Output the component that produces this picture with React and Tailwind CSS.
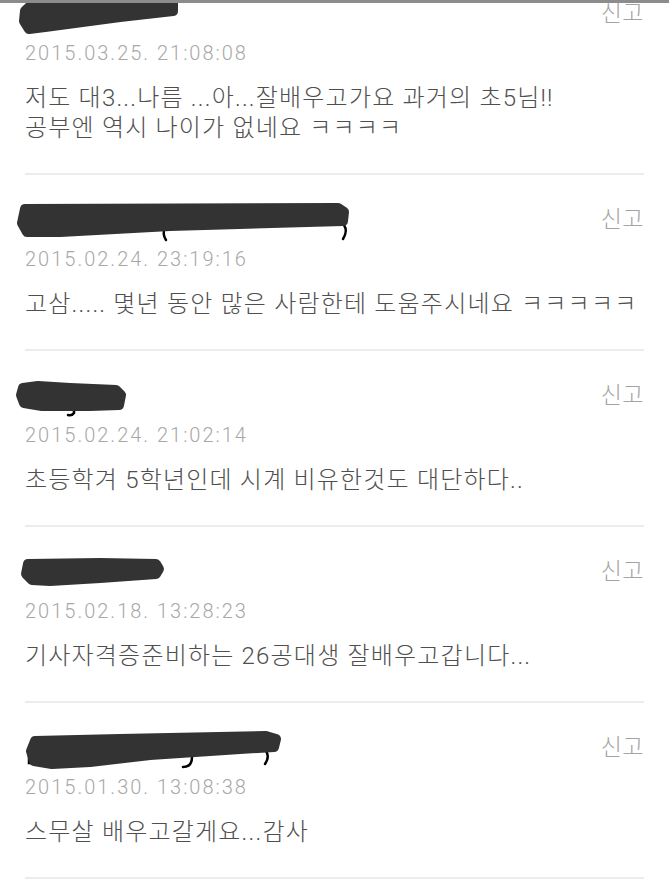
import React from "react";

// redacted nicknames -> dark marker blobs (screen x, row y)
const comments = [
  {
    date: "2015.03.25. 21:08:08",
    lines: ["저도 대3...나름 ...아...잘배우고가요 과거의 초5님!!", "공부엔 역시 나이가 없네요 ㅋㅋㅋㅋ"],
    blob: { w: 156, d: "M25 22 L42 6 L173 6 L173 22 L120 28 L45 38 L29 40 L24 32 Z", bits: [] },
  },
  {
    date: "2015.02.24. 23:19:16",
    lines: ["고삼..... 몇년 동안 많은 사람한테 도움주시네요 ㅋㅋㅋㅋㅋ"],
    blob: {
      w: 328,
      d: "M25 14 L338 13 L344 17 L343 26 L170 31 L60 37 L27 37 L22 28 Z",
      bits: ["M165 32 Q162 39 166 45", "M344 30 Q348 36 343 44"],
    },
  },
  {
    date: "2015.02.24. 21:02:14",
    lines: ["초등학겨 5학년인데 시계 비유한것도 대단하다.."],
    blob: {
      w: 104,
      d: "M23 17 L38 15 L70 17 L116 19 L121 24 L119 34 L90 35 L42 35 L24 32 L21 24 Z",
      bits: ["M74 34 L74 42 Q72 45 68 44"],
    },
  },
  {
    date: "2015.02.18. 13:28:23",
    lines: ["기사자격증준비하는 26공대생 잘배우고갑니다..."],
    blob: { w: 142, d: "M28 17 L100 16 L156 17 L159 22 L156 27 L100 31 L50 34 L32 33 L26 27 Z", bits: [] },
  },
  {
    date: "2015.01.30. 13:08:38",
    lines: ["스무살 배우고갈게요...감사"],
    blob: {
      w: 260,
      d: "M35 18 L120 16 L266 13 L276 16 L274 24 L240 26 L150 32 L90 39 L52 41 L34 38 L31 28 Z",
      bits: ["M29 26 L29 40 L38 40", "M192 34 Q192 44 183 44", "M266 28 Q270 34 265 41"],
    },
  },
];

const kr = "font-['Roboto','Noto_Sans_CJK_KR',sans-serif]";

function Blob({ w, d, bits }) {
  return (
    <svg width={w} height="44" viewBox={`25 0 ${w} 44`} className="block shrink-0 overflow-visible">
      {bits.map((b, i) => (
        <path key={i} d={b} fill="none" stroke="#000" strokeWidth="2.5" strokeLinecap="round" />
      ))}
      <path d={d} fill="#333" stroke="#333" strokeWidth="10" strokeLinejoin="round" />
    </svg>
  );
}

function Comment({ c }) {
  return (
    <div className="mx-[25px] pt-[20px] pb-[30px] border-b-2 border-[#ececec]">
      <div className="h-[44px] flex items-center justify-between">
        <Blob {...c.blob} />
        <span className="text-[23px] leading-none tracking-[0.5px] font-light text-[#a3a3a3] font-['Noto_Sans_CJK_KR',sans-serif]">
          신고
        </span>
      </div>
      <div className="h-[40px] flex items-center text-[20px] tracking-[2px] font-light text-[#a8a8a8] font-['Roboto',sans-serif]">
        {c.date}
      </div>
      <div className={`mt-[10px] text-[24px] leading-[30px] tracking-[1.2px] font-light text-[#4f4f4f] ${kr}`}>
        {c.lines.map((l, i) => (
          <div key={i}>{l}</div>
        ))}
      </div>
    </div>
  );
}

export default function App() {
  return (
    <div className="relative w-[669px] h-[881px] overflow-hidden bg-white flex flex-col">
      {/* header edge over the list */}
      <div className="absolute top-0 left-0 right-0 h-[3px] bg-[#8c8c8c] z-10" />
      <div className="-mt-[31px] flex flex-col">
        {comments.map((c, i) => (
          <Comment key={i} c={c} />
        ))}
      </div>
    </div>
  );
}
